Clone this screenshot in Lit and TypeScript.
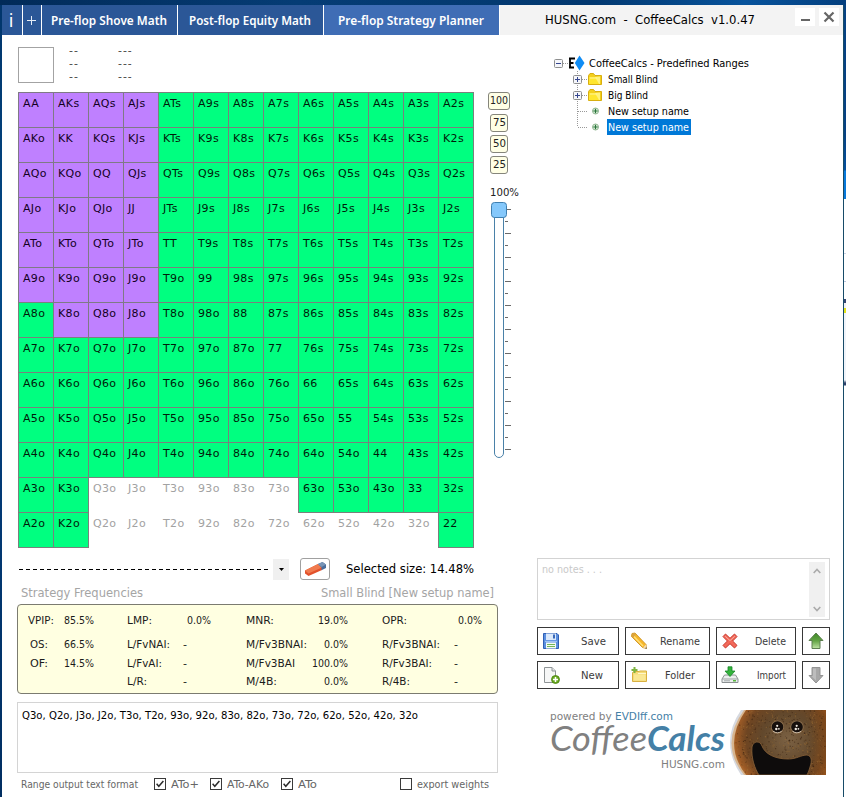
import { LitElement, html, svg, css } from "lit";
import { customElement, property } from "lit/decorators.js";
import { classMap } from "lit/directives/class-map.js";

/** A single line of text condensed or stretched to a given width. */
@customElement("fit-text")
class FitText extends LitElement {
  @property({ type: Number }) w = 0;
  static styles = css`
    :host { display: inline-block; white-space: pre; flex: none; text-align: left; }
    .t { display: inline-block; transform-origin: 0 50%; }
  `;
  firstUpdated() {
    const t = this.renderRoot.querySelector(".t") as HTMLElement;
    const natural = t.offsetWidth;
    this.style.width = `${this.w}px`;
    if (natural > 0) {
      const exact = t.getBoundingClientRect().width;
      t.style.transform = `scaleX(${this.w / exact})`;
    }
  }
  render() { return html`<span class="t"><slot></slot></span>`; }
}

const RANKS = "AKQJT98765432".split("");

function hand(r: number, c: number) {
  if (r === c) return RANKS[r] + RANKS[c];
  return c > r ? RANKS[r] + RANKS[c] + "s" : RANKS[c] + RANKS[r] + "o";
}
function kind(r: number, c: number) {
  if (c < 4 && (r < 6 || (r === 6 && c > 0))) return "fold";
  if ((r === 11 && c > 1 && c < 8) || (r === 12 && c > 1 && c < 12)) return "none";
  return "play";
}

const folder = html`<svg class="i16" viewBox="0 0 16 16">
  <path d="M1.5 4.5L3 2.5H6.5L8 4.5H14.5V13.5H1.5Z" fill="#f3cf1c" stroke="#d8ae10"/>
  <path d="M2 6H12.5V13H2Z" fill="#ffe62e"/><path d="M8 6L13 5.5V13H12Z" fill="#fff27a"/>
  <path d="M3 7H10" stroke="#fff59a"/></svg>`;
const plus = html`<svg class="i16" viewBox="0 0 16 16">
  <circle cx="7.5" cy="8" r="3" fill="#e6f3e4" stroke="#8fb690" stroke-width="1"/>
  <path d="M7.5 5.7V10.3M5.2 8H9.8" stroke="#28753a" stroke-width="1.2"/></svg>`;
const box = (open: boolean) => html`<svg class="exp" viewBox="0 0 9 9">
  <rect x=".5" y=".5" width="8" height="8" rx="1" fill="#f5f6fa" stroke="#8e8f8f"/>
  <path d="${open ? "M2 4.5H7" : "M2 4.5H7M4.5 2V7"}" stroke="#35468f"/></svg>`;

const icons: Record<string, unknown> = {
  save: html`<svg class="ic" viewBox="0 0 18 18">
    <path d="M1.5 1.5H15L16.5 3V16.5H1.5Z" fill="#5b8fe0" stroke="#2f5fb4"/>
    <rect x="4" y="1.5" width="10" height="6.5" fill="#dbe9fb"/><rect x="11" y="2.5" width="2" height="4" fill="#3a69b8"/>
    <rect x="3" y="8.8" width="12" height="1.2" fill="#9ec2f5"/>
    <rect x="4" y="10.5" width="10" height="6" fill="#f4faf4"/><path d="M5 12.5H13M5 14.5H13" stroke="#72b558" stroke-width="1.2"/></svg>`,
  rename: html`<svg class="ic" viewBox="0 0 18 18">
    <path d="M2 1.5L5 1L16 12.5L16.5 16.5L12.5 15.5L1.5 4.5Z" fill="#f6b72a" stroke="#c88916" stroke-width=".8"/>
    <path d="M3 3.5L13 14" stroke="#ffe07a" stroke-width="1.3"/>
    <path d="M1.5 4.5L2 1.5L5 1L6 2L3 6Z" fill="#dba33c"/>
    <path d="M13 15.5L16 12.5L16.7 16.7Z" fill="#f3dcb3"/><path d="M15.2 16.3L16.3 15.2L16.8 16.8Z" fill="#333"/></svg>`,
  del: html`<svg class="ic" viewBox="0 0 18 18">
    <path d="M4.5 2L9 6.3L13.5 2L16 4.6L11.6 9L16 13.4L13.5 16L9 11.7L4.5 16L2 13.4L6.4 9L2 4.6Z" fill="#f2695a" stroke="#c9362a"/>
    <path d="M4.3 4.3L9 8.6L13.7 4.3" fill="none" stroke="#fab0a2"/></svg>`,
  fresh: html`<svg class="ic" viewBox="0 0 18 18">
    <path d="M2.5 1.5H10L13.5 5V16.5H2.5Z" fill="#f6f7f7" stroke="#8f9496"/><path d="M10 1.5V5H13.5" fill="#dfe3e4" stroke="#8f9496"/>
    <circle cx="13.5" cy="13.5" r="4" fill="#68a81f" stroke="#47800e" stroke-width=".8"/><path d="M13.5 11V16M11 13.5H16" stroke="#fff" stroke-width="1.5"/></svg>`,
  folder: html`<svg class="ic" viewBox="0 0 18 18">
    <path d="M2.5 15.5V6.5L4 5.5H9L10 5H16.5V15.5Z" fill="#f5dc78" stroke="#d9b040"/>
    <path d="M4 8.5H15.5V14.5H4Z" fill="#fae894"/><path d="M8 7.5H16" stroke="#fff6cb"/>
    <path d="M4.5 1V7M1.5 4H7.5" stroke="#7eb440" stroke-width="2"/></svg>`,
  import: html`<svg class="ic" viewBox="0 0 18 18">
    <path d="M3.5 9H14.5L17 13V16.5H1V13Z" fill="#eceeee" stroke="#8b9092"/><path d="M1.3 13H16.7" stroke="#9da2a4"/>
    <path d="M3 14.8H9" stroke="#a2a7a9"/><rect x="12" y="14" width="3" height="1.5" fill="#56b73e"/>
    <path d="M7 .8H11V5H14L9 10.5L4 5H7Z" fill="#33b33b" stroke="#16872a" stroke-width=".8"/></svg>`,
  up: html`<svg class="ic" viewBox="0 0 18 18">
    <defs><linearGradient id="g" x1="0" y1="0" x2="0" y2="1"><stop offset="0" stop-color="#3f8a26"/><stop offset=".5" stop-color="#62a344"/><stop offset="1" stop-color="#bfe3a4"/></linearGradient></defs>
    <path d="M9 1L16 8.5H13V16.5H5V8.5H2Z" fill="url(#g)" stroke="#5d7f50"/></svg>`,
  down: html`<svg class="ic" viewBox="0 0 18 18">
    <path d="M9 17L16 9.5H13V1.5H5V9.5H2Z" fill="#a8a8a8" stroke="#949494"/><path d="M6 2.5H9V14.5L4.5 10H6Z" fill="#bdbdbd"/></svg>`,
};

const STATS: [string, number, string, number][][] = [
  [["VPIP:", 26, "85.5%", 30], ["LMP:", 25, "0.0%", 24], ["MNR:", 28, "19.0%", 30], ["OPR:", 25, "0.0%", 24]],
  [["OS:", 18, "66.5%", 30], ["L/FvNAI:", 43, "-", 4], ["M/Fv3BNAI:", 61, "0.0%", 24], ["R/Fv3BNAI:", 58, "-", 4]],
  [["OF:", 18, "14.5%", 30], ["L/FvAI:", 35, "-", 4], ["M/Fv3BAI", 49, "100.0%", 36], ["R/Fv3BAI:", 50, "-", 4]],
  [["", 0, "", 0], ["L/R:", 20, "-", 4], ["M/4B:", 31, "0.0%", 24], ["R/4B:", 28, "-", 4]],
];

/** Coffee cup: crema, bubbles, eyes and the smile. */
function coffee() {
  const specks = [];
  let s = 17;
  const rnd = () => (s = (s * 16807) % 2147483647) / 2147483647;
  for (let i = 0; i < 700; i++) {
    const x = 5 + rnd() * 90, y = rnd() * 65, v = rnd();
    if (x < 5 + Math.pow(Math.abs(y - 34) / 34, 2) * 14) continue;
    specks.push(svg`<circle cx=${x.toFixed(1)} cy=${y.toFixed(1)} r=${(0.3 + rnd() * 0.45).toFixed(2)}
      fill=${v > 0.6 ? "#9a6a32" : "#3b2311"} opacity=".6"/>`);
  }
  const eye = (x: number, y: number) => svg`<circle cx=${x} cy=${y} r="6.6" fill="#b3926a" opacity=".5"/>
    <circle cx=${x} cy=${y} r="5.8" fill="#160f0c"/><circle cx=${x - 0.3} cy=${y - 1.2} r="1.1" fill="#efe8df"/>
    <circle cx=${x - 1.2} cy=${y + 2} r="1.2" fill="#efe8df"/><circle cx=${x + 1.4} cy=${y + 1.8} r=".9" fill="#efe8df"/>
    <path d="M${x - 4.4} ${y + 4.2}Q${x} ${y + 7.4} ${x + 4.2} ${y + 4.2}" fill="none" stroke="#e4d6c2" stroke-width=".8"/>`;
  return html`<svg class="cup" viewBox="0 0 96 65">
    <defs>
      <radialGradient id="c" gradientUnits="userSpaceOnUse" cx="58" cy="30" r="58">
        <stop offset="0" stop-color="#7c6244"/><stop offset=".45" stop-color="#62482c"/><stop offset=".72" stop-color="#6e4522"/><stop offset=".9" stop-color="#a05c26"/><stop offset="1" stop-color="#c9833f"/>
      </radialGradient>
      <linearGradient id="r" x1="0" y1="0" x2="1" y2="0"><stop offset=".8" stop-color="#8a4a14" stop-opacity="0"/><stop offset="1" stop-color="#8c4a12" stop-opacity=".5"/></linearGradient>
    </defs>
    <path d="M11 0Q-11 32 11 65H20V0Z" fill="#d6d9e0"/>
    <path d="M14 0Q-11 34 14 65H96V0Z" fill="#d7b58f"/>
    <path d="M16 0Q-8 34 16 65H96V0Z" fill="url(#c)"/><path d="M16 0Q-8 34 16 65H96V0Z" fill="url(#r)"/>
    ${specks}
    ${eye(47.5, 17)}${eye(67, 17)}
    <path d="M22 37C23 31 30 30 32 36C35 44 45 49 58 49C67 49 71 45 77 45C82 46 82 51 80 57Q79 61 77 65H29C25 59 21 48 22 37Z" fill="#0e0c0c" stroke="#8a6239" stroke-width=".8"/>
  </svg>`;
}

@customElement("app-root")
class AppRoot extends LitElement {
  static styles = css`
    :host { display: block; width: 846px; height: 797px; overflow: hidden; position: relative;
      font-family: "DejaVu Sans", sans-serif; font-size: 11px; color: #000; line-height: 16px;
      background: linear-gradient(90deg, #012a58, #053c75 35%, #02386f 70%, #07539c 88%, #043f7e) top / 100% 5px no-repeat, #fff; }
    * { box-sizing: border-box; }
    svg { display: block; flex: none; }
    .desk { display: grid; grid-template-columns: 2px 841px 3px; padding-top: 5px; height: 797px; }
    .edgeL { background: linear-gradient(#01356b, #034a88 35%, #023a76 60%, #012e61); }
    .edgeR { border-left: 1px solid #174b68;
      background: linear-gradient(#064283 0 130px, #05509e 165px, #0879db 166px 194px, #fff 194px 248px, #ccd4e5 248px 249px, #fff 249px 276px, #bcc6dd 276px 277px, #fff 277px 294px, #34446f 294px 298px, #f1f1f4 298px 303px, #e2e217 303px 308px, #f0f4fa 308px 375px, #2e4169 378px 380px, #fff 381px); }
    .win { background: #fff; height: 792px; }
    .bar { display: flex; height: 30px; background: #f3f3f3; }
    .tab { height: 30px; background: #2b5797; color: #fff; display: flex; justify-content: center; align-items: center;
      font: 600 13px/20px "Noto Sans", sans-serif; border-right: 1px solid #fff; }
    .t1 { width: 21px; font-size: 18px; font-weight: 400; padding-right: 2px; } .t2 { width: 19px; }
    .t3 { width: 136px; padding-right: 1px; } .t4 { width: 146px; } .t5 { width: 177px; background: #3f6db5; padding-right: 1px; }
    .title { width: 295px; padding-left: 45px; display: flex; align-items: center; font-size: 12px; }
    .wb { width: 20px; height: 18px; margin: 3px 4px 0 0; background: #fff; }
    .body { display: grid; grid-template-columns: 520px 321px; }
    .left { padding: 12px 0 0 15px; }
    .info { display: flex; height: 45px; color: #555; padding-left: 1px; }
    .card { width: 36px; height: 36px; border: 1px solid #a3a3a3; margin-right: 15px; }
    .dashes { width: 49px; display: flex; flex-direction: column; margin-top: -2px; }
    .dashes span { height: 13px; line-height: 13px; font-family: "DejaVu Sans Condensed", "DejaVu Sans", sans-serif; font-size: 12px; letter-spacing: 1px; }
    .mid { display: flex; height: 456px; padding-left: 1px; }
    .grid { display: grid; grid-template-columns: repeat(13, 35px); grid-template-rows: repeat(13, 35px); width: 456px; }
    .cell { width: 36px; height: 36px; padding: 1px 0 0 4px; line-height: 19px; letter-spacing: .35px; border: 1px solid transparent; }
    .play { background: #00ff80; border-color: #7a807d; color: #001a0a; }
    .fold { background: #bf80ff; border-color: #7f7a85; color: #14001f; }
    .none { color: #a2a2a2; }
    .pct { width: 50px; margin-left: 15px; display: flex; flex-direction: column; align-items: flex-start; }
    .pb { height: 18px; width: 18px; margin: 0 0 3px 2px; border: 1px solid #85857b; border-radius: 3px; background: #ffffe5; display: flex; align-items: center; justify-content: center; color: #222; }
    .pb.w { width: 22px; margin: 0 0 4px 0; }
    .plabel { margin: 7px 0 0 2px; color: #222; height: 18px; line-height: 17px; }
    .slider { margin-left: 2px; }
    .combo { display: flex; align-items: center; height: 22px; margin-top: 10px; }
    .dl { width: 251px; height: 1px; margin: 0 3px 0 2px; background: repeating-linear-gradient(90deg, #000 0 4px, transparent 4px 7px); }
    .drop { width: 16px; height: 21px; background: #f0f0f0; display: flex; align-items: center; justify-content: center; }
    .er { width: 30px; height: 22px; border: 1px solid #a0a0a0; border-radius: 3px; margin: 0 16px 0 11px; padding: 2px 3px; }
    .sel { font-size: 12px; }
    .heads { display: flex; justify-content: space-between; width: 481px; height: 24px; padding: 5px 4px 0 4px; color: #a5a5a5; font-size: 11.5px; }
    .stats { width: 481px; height: 90px; border: 1px solid #7b7b70; border-radius: 4px; background: #ffffe1; padding: 1px 0 0 10px; color: #1b1b1b;
      display: grid; grid-template-columns: 36px 63px 56px 63px 66px 70px 72px 40px; grid-template-rows: 29px 19px 19px 18px; align-items: center; }
    .c { font-family: "DejaVu Sans Condensed", "DejaVu Sans", sans-serif; font-size: 11px; }
    .i2 { padding-left: 2px; } .i4 { padding-left: 4px; } .r { text-align: right; padding-right: 34px; }
    .out { width: 481px; height: 71px; border: 1px solid #d4d4d4; margin-top: 8px; padding: 5px 4px; }
    .opts { display: flex; align-items: center; height: 22px; color: #666; }
    .opts fit-text { padding-top: 1px; }
    .cb { margin-left: 16px; margin-right: 5px; } .cb.c2 { margin-left: 11px; } .cb.c3 { margin-left: 12px; } .cb.sp { margin-left: 83px; }
    .right { padding: 20px 0 0 15px; }
    .tree { height: 503px; padding-left: 17px; }
    .row { display: flex; align-items: center; height: 16px; }
    .exp { width: 9px; height: 9px; }
    .dot { width: 5px; height: 1px; background: repeating-linear-gradient(90deg, #999 0 1px, transparent 1px 2px); }
    .i16 { width: 16px; height: 16px; }
    .tx { margin-left: 4px; } .logo { width: 17px; height: 16px; }
    .row .tx, .hl { line-height: 17px; }
    .kids .row { padding-left: 19px; }
    .kids .tx { margin-left: 5px; }
    .kids { background: repeating-linear-gradient(#999 0 1px, transparent 1px 2px) 23px 0 / 1px 56px no-repeat; }
    .leaf .dot { width: 10px; margin: 0 -1px 0 5px; }
    .hl { background: #0078d7; color: #fff; height: 16px; width: 84px; padding-left: 1px; margin-left: 4px; }
    .leaf .i16 { transform: translateX(1px); }
    .notes { width: 293px; height: 62px; border: 1px solid #d3d3d3; display: flex; justify-content: space-between; padding: 3px 4px; color: #c9c9c9; }
    .sb { width: 16px; height: 55px; background: #f0f0f0; display: flex; flex-direction: column; justify-content: space-between; padding: 6px 4px 5px; }
    .btns { display: grid; grid-template-columns: 82px 85px 80px 28px; gap: 6px; grid-auto-rows: 28px; margin-top: 7px; }
    .btn { border: 1px solid #383838; display: flex; align-items: center; justify-content: space-between; padding: 0 12px 0 4px; color: #3b3b3b; }
    .btn fit-text { padding-top: 1px; }
    .btn.n { padding-right: 15px; } .btn.d { padding-right: 9px; } .btn.f { padding-right: 14px; } .btn.x { padding-right: 9px; }
    .ic { width: 18px; height: 18px; }
    .brand { display: flex; margin: 21px 0 0 13px; height: 66px; }
    .words { width: 180px; display: flex; flex-direction: column; color: #808080; }
    .pw { height: 13px; line-height: 13px; } .bl { color: #4480a6; }
    .big { height: 36px; line-height: 32px; font: italic 400 35px/32px Lato, sans-serif; margin-top: -2px; }
    .big b { color: #4480a6; font-weight: 700; }
    .site { padding-left: 111px; height: 16px; line-height: 16px; }
    .cup { width: 96px; height: 65px; }
  `;

  check(on: boolean) {
    return html`<svg width="12" height="12" viewBox="0 0 12 12"><rect x=".5" y=".5" width="11" height="11" fill="#fff" stroke="#3a3a3a"/>
      ${on ? svg`<path d="M2.6 5.8L4.8 8.3L9.4 3" fill="none" stroke="#2c2c2c" stroke-width="1.5"/>` : ""}</svg>`;
  }
  btn(icon: string, label: string, w: number, cls = "") {
    return html`<div class="btn ${cls}">${icons[icon]}${label ? html`<fit-text class="c" w=${w}>${label}</fit-text>` : ""}</div>`;
  }
  slider() {
    const ticks = Array.from({ length: 21 }, (_, i) => svg`<path d="M15 ${7.5 + i * 12}h${i % 2 ? 3 : 6}" stroke="#6a6a6a"/>`);
    return html`<svg class="slider" width="26" height="258" viewBox="0 0 26 258">
      <rect x="4.5" y="4.5" width="9" height="251" rx="4.5" fill="#fff" stroke="#4a81a8"/>
      ${ticks}<rect x="1.5" y=".5" width="15" height="15" rx="3" fill="#85c8fb" stroke="#3f7fb0"/></svg>`;
  }
  render() {
    return html`<div class="desk"><div class="edgeL"></div><div class="win">
      <div class="bar">
        <div class="tab t1">i</div><div class="tab t2"><svg width="9" height="9"><path d="M0 4.5H9M4.5 0V9" stroke="#e6edf7"/></svg></div>
        <div class="tab t3"><fit-text w="116">Pre-flop Shove Math</fit-text></div>
        <div class="tab t4"><fit-text w="122">Post-flop Equity Math</fit-text></div>
        <div class="tab t5"><fit-text w="146">Pre-flop Strategy Planner</fit-text></div>
        <div class="title"><fit-text w="210">HUSNG.com  -  CoffeeCalcs  v1.0.47</fit-text></div>
        <div class="wb"><svg width="20" height="18"><path d="M6 12H15" stroke="#666" stroke-width="2"/></svg></div>
        <div class="wb"><svg width="20" height="18"><path d="M5.5 4.5L14.5 13.5M14.5 4.5L5.5 13.5" stroke="#666" stroke-width="2.2"/></svg></div>
      </div>
      <div class="body">
        <div class="left">
          <div class="info"><div class="card"></div>
            <div class="dashes"><span>--</span><span>--</span><span>--</span></div>
            <div class="dashes"><span>---</span><span>---</span><span>---</span></div></div>
          <div class="mid">
            <div class="grid">${RANKS.map((_, r) => RANKS.map((_, c) =>
              html`<div class=${classMap({ cell: true, [kind(r, c)]: true })}>${hand(r, c)}</div>`))}</div>
            <div class="pct">
              <div class="pb w c"><fit-text w="18">100</fit-text></div>
              ${["75", "50", "25"].map((p) => html`<div class="pb c"><fit-text w="13">${p}</fit-text></div>`)}
              <div class="plabel c"><fit-text w="29">100%</fit-text></div>
              ${this.slider()}
            </div>
          </div>
          <div class="combo"><div class="dl"></div><div class="drop"><svg width="5" height="3"><path d="M0 0H5L2.5 3Z"/></svg></div>
            <div class="er"><svg width="23" height="16" viewBox="0 0 23 16">
              <path d="M1 9.5L14 3L18 6.5L18 9L4.5 15L1 12.5Z" fill="#e2512b"/><path d="M1 9.5L14 3L18 6.5L4.5 12.5Z" fill="#f07a4e"/>
              <path d="M14 3L18.5 1L22 3.5V7L17.5 9.2V6.5Z" fill="#4a6d9b"/><path d="M14 3L18.5 1L22 3.5L17.7 6Z" fill="#7894b6"/></svg></div>
            <fit-text class="sel" w="128">Selected size: 14.48%</fit-text></div>
          <div class="heads"><fit-text w="122">Strategy Frequencies</fit-text><fit-text w="173">Small Blind [New setup name]</fit-text></div>
          <div class="stats c">${STATS.map((row, r) => row.map(([l, lw, v, vw], g) => html`
            <div class=${classMap({ i2: g === 0 && r > 0 })}>${l ? html`<fit-text w=${lw}>${l}</fit-text>` : ""}</div>
            <div class=${classMap({ r: g === 2, i4: r === 0 && g % 2 === 1 })}>${v ? html`<fit-text w=${vw}>${v}</fit-text>` : ""}</div>`))}</div>
          <div class="out c"><fit-text w="396">Q3o, Q2o, J3o, J2o, T3o, T2o, 93o, 92o, 83o, 82o, 73o, 72o, 62o, 52o, 42o, 32o</fit-text></div>
          <div class="opts c"><fit-text class="tx" w="117">Range output text format</fit-text>
            <div class="cb">${this.check(true)}</div><fit-text w="28">ATo+</fit-text>
            <div class="cb c2">${this.check(true)}</div><fit-text w="42">ATo-AKo</fit-text>
            <div class="cb c3">${this.check(true)}</div><fit-text w="19">ATo</fit-text>
            <div class="cb sp">${this.check(false)}</div><fit-text w="72">export weights</fit-text></div>
        </div>
        <div class="right">
          <div class="tree c">
            <div class="row">${box(true)}<div class="dot"></div>
              <svg class="logo" viewBox="0 0 17 16"><path d="M1 3.5H7M1 12.5H6M2 3V13M2 8H5.5" stroke="#000" stroke-width="1.8" fill="none"/><path d="M11.5 .5L16.5 8L11.5 15.5L6.8 8Z" fill="#0f8cf5"/></svg>
              <fit-text class="tx" w="160">CoffeeCalcs - Predefined Ranges</fit-text></div>
            <div class="kids">
              <div class="row">${box(false)}<div class="dot"></div>${folder}<fit-text class="tx" w="50">Small Blind</fit-text></div>
              <div class="row">${box(false)}<div class="dot"></div>${folder}<fit-text class="tx" w="40">Big Blind</fit-text></div>
              <div class="row leaf"><div class="dot"></div>${plus}<fit-text class="tx" w="81">New setup name</fit-text></div>
              <div class="row leaf"><div class="dot"></div>${plus}<div class="hl"><fit-text w="81">New setup name</fit-text></div></div>
            </div>
          </div>
          <div class="notes c"><fit-text w="60">no notes . . .</fit-text>
            <div class="sb"><svg width="8" height="6"><path d="M.7 5L4 1.5L7.3 5" fill="none" stroke="#aaa" stroke-width="1.6"/></svg>
              <svg width="8" height="6"><path d="M.7 1L4 4.5L7.3 1" fill="none" stroke="#aaa" stroke-width="1.6"/></svg></div></div>
          <div class="btns">
            ${this.btn("save", "Save", 25)}${this.btn("rename", "Rename", 40, "x")}${this.btn("del", "Delete", 31, "d")}${this.btn("up", "", 0, "x")}
            ${this.btn("fresh", "New", 22, "n")}${this.btn("folder", "Folder", 30, "f")}${this.btn("import", "Import", 29, "d")}${this.btn("down", "", 0, "x")}
          </div>
          <div class="brand"><div class="words">
            <div class="pw"><fit-text w="65">powered by </fit-text><fit-text class="bl" w="58">EVDIff.com</fit-text></div>
            <div class="big"><fit-text w="97">Coffee</fit-text><fit-text w="78"><b>Calcs</b></fit-text></div>
            <div class="site"><fit-text w="64">HUSNG.com</fit-text></div>
          </div>${coffee()}</div>
        </div>
      </div>
    </div><div class="edgeR"></div></div>`;
  }
}
